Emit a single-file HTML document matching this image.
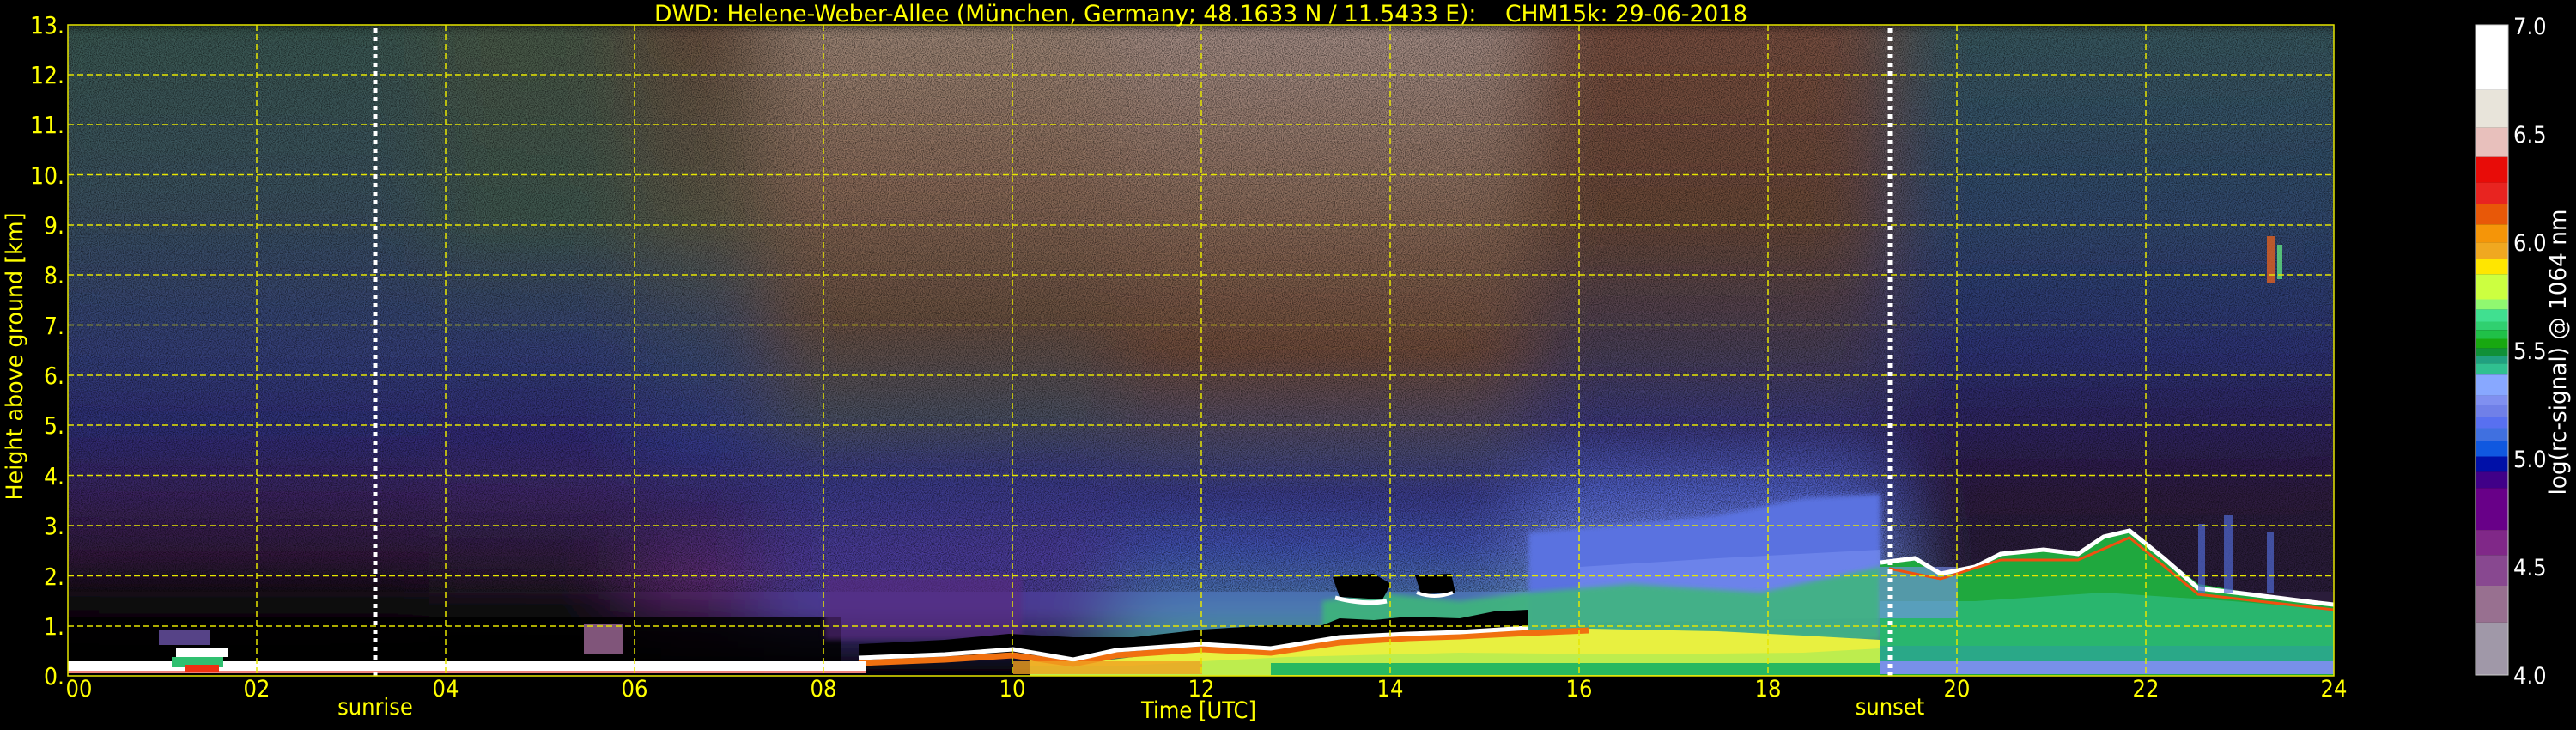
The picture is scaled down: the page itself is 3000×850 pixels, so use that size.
<!DOCTYPE html>
<html><head><meta charset="utf-8"><style>
html,body{margin:0;padding:0;background:#000;}
svg{display:block}
text{font-family:"DejaVu Sans Condensed","DejaVu Sans","Liberation Sans",sans-serif;fill:#ffff00}
</style></head><body>
<svg width="3000" height="850" viewBox="0 0 3000 850" xmlns="http://www.w3.org/2000/svg">
<defs>
<clipPath id="pc"><rect x="79" y="29" width="2639" height="758"/></clipPath>
<filter id="hb" x="-5%" y="-5%" width="110%" height="110%"><feGaussianBlur stdDeviation="45 6"/></filter>
<filter id="sb"><feGaussianBlur stdDeviation="3"/></filter>
<filter id="nz" x="0" y="0" width="100%" height="100%">
<feTurbulence type="fractalNoise" baseFrequency="0.9" numOctaves="1" seed="3" result="t"/>
<feColorMatrix type="matrix" values="0 0 0 0 0  0 0 0 0 0  0 0 0 0 0  1.5 0 0 0 -0.58"/>
</filter>
<linearGradient id="g1" x1="0" y1="0" x2="0" y2="1"><stop offset="0" stop-color="#3a5a52"/><stop offset=".3" stop-color="#3a5062"/><stop offset=".5" stop-color="#34407a"/><stop offset=".62" stop-color="#2e2e78"/><stop offset=".72" stop-color="#3a2460"/><stop offset=".82" stop-color="#30183a"/><stop offset=".88" stop-color="#100810"/><stop offset="1" stop-color="#000"/></linearGradient>
<linearGradient id="g2" x1="0" y1="0" x2="0" y2="1"><stop offset="0" stop-color="#4a5a48"/><stop offset=".3" stop-color="#405850"/><stop offset=".5" stop-color="#34407a"/><stop offset=".62" stop-color="#302c78"/><stop offset=".72" stop-color="#3e2868"/><stop offset=".85" stop-color="#2a1830"/><stop offset=".9" stop-color="#0a0a0a"/><stop offset="1" stop-color="#000"/></linearGradient>
<linearGradient id="g3" x1="0" y1="0" x2="0" y2="1"><stop offset="0" stop-color="#6a5040"/><stop offset=".3" stop-color="#5a5a48"/><stop offset=".5" stop-color="#3a4a70"/><stop offset=".65" stop-color="#33388a"/><stop offset=".75" stop-color="#402a70"/><stop offset=".85" stop-color="#5a2a70"/><stop offset=".9" stop-color="#3a1a48"/><stop offset="1" stop-color="#000"/></linearGradient>
<linearGradient id="g4" x1="0" y1="0" x2="0" y2="1"><stop offset="0" stop-color="#a08878"/><stop offset=".25" stop-color="#8a6a58"/><stop offset=".45" stop-color="#6a5040"/><stop offset=".6" stop-color="#4a5060"/><stop offset=".7" stop-color="#3a3a8a"/><stop offset=".82" stop-color="#4a3a9a"/><stop offset=".9" stop-color="#4a3a90"/><stop offset="1" stop-color="#000"/></linearGradient>
<linearGradient id="g5" x1="0" y1="0" x2="0" y2="1"><stop offset="0" stop-color="#a89088"/><stop offset=".3" stop-color="#8a6a58"/><stop offset=".5" stop-color="#704c3a"/><stop offset=".65" stop-color="#4a4a70"/><stop offset=".72" stop-color="#3a3c8c"/><stop offset=".8" stop-color="#4050b0"/><stop offset=".9" stop-color="#4c7ab0"/><stop offset="1" stop-color="#30a060"/></linearGradient>
<linearGradient id="g6" x1="0" y1="0" x2="0" y2="1"><stop offset="0" stop-color="#7a5040"/><stop offset=".3" stop-color="#6a4838"/><stop offset=".5" stop-color="#4a4058"/><stop offset=".62" stop-color="#3a3880"/><stop offset=".72" stop-color="#5060c8"/><stop offset=".8" stop-color="#6a80e0"/><stop offset=".9" stop-color="#70a0d0"/><stop offset="1" stop-color="#40b070"/></linearGradient>
<linearGradient id="g7" x1="0" y1="0" x2="0" y2="1"><stop offset="0" stop-color="#3a5a60"/><stop offset=".3" stop-color="#304a70"/><stop offset=".5" stop-color="#2e3478"/><stop offset=".62" stop-color="#2e2460"/><stop offset=".72" stop-color="#2e1a40"/><stop offset=".8" stop-color="#2a1a3a"/><stop offset="1" stop-color="#2a1a3a"/></linearGradient>
</defs>

<rect width="3000" height="850" fill="#000"/>

<g clip-path="url(#pc)">
 <g filter="url(#hb)">
  <rect x="0" y="29" width="500" height="758" fill="url(#g1)"/>
  <rect x="500" y="29" width="240" height="758" fill="url(#g2)"/>
  <rect x="740" y="29" width="150" height="758" fill="url(#g3)"/>
  <rect x="890" y="29" width="410" height="758" fill="url(#g4)"/>
  <rect x="1300" y="29" width="480" height="758" fill="url(#g5)"/>
  <rect x="1780" y="29" width="420" height="758" fill="url(#g6)"/>
  <rect x="2200" y="29" width="600" height="758" fill="url(#g7)"/>
 </g>

 <!-- speckle texture -->
 <rect x="79" y="29" width="2639" height="660" filter="url(#nz)"/>

 <rect x="79" y="718" width="900" height="60" fill="#000" opacity="0.85"/>
 <rect x="680" y="727" width="46" height="35" fill="#a06a98" opacity="0.8"/>
 <rect x="960" y="670" width="230" height="75" fill="#5a2a80" opacity="0.6" filter="url(#sb)"/>

 <polygon points="1780,620 1900,610 2000,600 2100,580 2190,575 2190,740 1780,740" fill="#5a72e0" filter="url(#sb)"/>
 <polygon points="1840,660 2000,650 2190,640 2190,720 1840,725" fill="#7890f0" opacity="0.6"/>
 <polygon points="1540,700 1600,690 1700,700 1780,690 1900,680 2050,690 2190,660 2190,745 1540,745" fill="#3cb878" opacity="0.85" filter="url(#sb)"/>
 <polygon points="1552,672 1600,668 1620,680 1610,698 1560,695" fill="#000"/>
 <path d="M1555,696 Q1590,705 1615,700" stroke="#fff" stroke-width="5" fill="none"/>
 <polygon points="1648,670 1690,668 1695,690 1655,692" fill="#000"/>
 <path d="M1650,690 Q1670,698 1692,690" stroke="#fff" stroke-width="4" fill="none"/>

 <polygon points="1000,750 1100,745 1175,738 1250,742 1320,742 1400,733 1480,728 1540,728 1560,720 1600,722 1640,718 1700,720 1740,712 1780,710 1780,735 1700,738 1640,740 1560,745 1520,750 1480,758 1400,752 1300,760 1250,770 1180,760 1100,765 1000,770" fill="#000"/>
 <polygon points="1200,785 1200,768 1260,772 1320,765 1400,755 1480,758 1540,748 1600,742 1700,740 1780,735 1850,732 2000,735 2100,740 2190,745 2190,787 1200,787" fill="#e8f040"/>
 <polygon points="1200,787 1200,775 1300,776 1400,770 1500,765 1700,760 1900,762 2100,760 2190,755 2190,787" fill="#b8ec50" opacity="0.9"/>
 <rect x="1480" y="772" width="710" height="14" fill="#28b860"/>
 <path d="M1000,772 L1100,768 L1180,763 L1250,773 L1300,763 L1400,756 L1480,760 L1560,748 L1640,743 L1700,741 L1780,737 L1850,734" stroke="#f07010" stroke-width="7" fill="none"/>
 <path d="M1000,766 L1100,762 L1180,756 L1250,768 L1300,757 L1400,750 L1480,755 L1560,742 L1640,738 L1700,736 L1780,731" stroke="#fff" stroke-width="5" fill="none"/>
 <rect x="1180" y="770" width="220" height="15" fill="#f0a020" opacity="0.8"/>

 <rect x="79" y="770" width="930" height="14" fill="#fff"/>
 <rect x="79" y="781" width="930" height="3" fill="#e03020" opacity="0.6"/>
 <rect x="200" y="765" width="60" height="12" fill="#30c070"/>
 <rect x="205" y="755" width="60" height="10" fill="#fff"/>
 <rect x="185" y="733" width="60" height="18" fill="#7a60c0" opacity="0.7"/>
 <rect x="215" y="774" width="40" height="8" fill="#f03010"/>

 <polygon points="2190,655 2230,650 2260,668 2300,660 2330,645 2380,640 2420,645 2450,625 2480,618 2510,640 2560,680 2620,690 2660,695 2700,700 2718,702 2718,787 2190,787" fill="#1fa83e"/>
 <polygon points="2190,700 2300,700 2450,690 2600,700 2718,710 2718,760 2190,760" fill="#30c090" opacity="0.6"/>
 <rect x="2190" y="752" width="528" height="18" fill="#2aa888"/>
 <rect x="2190" y="770" width="528" height="15" fill="#7890e8"/>
 <rect x="2190" y="660" width="90" height="60" fill="#7890f0" opacity="0.6"/>
 <path d="M2190,655 L2230,650 L2260,668 L2300,660 L2330,645 L2380,640 L2420,645 L2450,625 L2480,618 L2520,650 L2560,685 L2620,692 L2660,697 L2700,702 L2718,704" stroke="#fff" stroke-width="5" fill="none"/>
 <path d="M2200,662 L2260,674 L2330,652 L2420,652 L2480,626 L2560,692 L2718,710" stroke="#f05010" stroke-width="3" fill="none"/>
 <rect x="2560" y="610" width="8" height="80" fill="#5068d0" opacity="0.7"/>
 <rect x="2590" y="600" width="10" height="90" fill="#5068d0" opacity="0.7"/>
 <rect x="2640" y="620" width="8" height="70" fill="#5068d0" opacity="0.7"/>
 <rect x="2640" y="275" width="10" height="55" fill="#e06020" opacity="0.8"/>
 <rect x="2652" y="285" width="6" height="40" fill="#60e080" opacity="0.8"/>

 <g stroke="#e6e600" stroke-width="1.5" stroke-dasharray="7 4" fill="none">
  <path d="M79,729H2718M79,670.5H2718M79,612H2718M79,553.5H2718M79,495H2718M79,437H2718M79,378.5H2718M79,320H2718M79,262H2718M79,203.5H2718M79,145H2718M79,87H2718"/>
  <path d="M299,29V787M519,29V787M739,29V787M959,29V787M1179,29V787M1399,29V787M1619,29V787M1839,29V787M2059,29V787M2279,29V787M2499,29V787"/>
 </g>
 <g stroke="#fff" stroke-width="5" stroke-dasharray="5 5">
  <path d="M437,33V787"/><path d="M2201,33V787"/>
 </g>
</g>
<rect x="79" y="29" width="2639" height="758" fill="none" stroke="#e6e600" stroke-width="1.5"/>

<text x="762" y="25" font-size="27" textLength="1273" lengthAdjust="spacingAndGlyphs">DWD: Helene-Weber-Allee (München, Germany; 48.1633 N / 11.5433 E):&#160;&#160;&#160;&#160;CHM15k: 29-06-2018</text>

<g font-size="28" text-anchor="end">
<text x="75" y="39">13.</text><text x="75" y="97">12.</text><text x="75" y="155">11.</text><text x="75" y="214">10.</text><text x="75" y="272">9.</text><text x="75" y="330">8.</text><text x="75" y="389">7.</text><text x="75" y="447">6.</text><text x="75" y="505">5.</text><text x="75" y="564">4.</text><text x="75" y="622">3.</text><text x="75" y="681">2.</text><text x="75" y="739">1.</text><text x="75" y="797">0.</text>
</g>
<text transform="translate(26,415) rotate(-90)" font-size="27" text-anchor="middle" textLength="335" lengthAdjust="spacingAndGlyphs">Height above ground [km]</text>

<g font-size="27" text-anchor="middle">
<text x="92" y="811">00</text><text x="299" y="811">02</text><text x="519" y="811">04</text><text x="739" y="811">06</text><text x="959" y="811">08</text><text x="1179" y="811">10</text><text x="1399" y="811">12</text><text x="1619" y="811">14</text><text x="1839" y="811">16</text><text x="2059" y="811">18</text><text x="2279" y="811">20</text><text x="2499" y="811">22</text><text x="2718" y="811">24</text>
<text x="437" y="832">sunrise</text><text x="2201" y="832">sunset</text>
<text x="1396" y="836">Time [UTC]</text>
</g>

<g>
<rect x="2883" y="29" width="38" height="75.8" fill="#ffffff"/>
<rect x="2883" y="104.8" width="38" height="43.9" fill="#e8e4da"/>
<rect x="2883" y="148.7" width="38" height="34.1" fill="#e8c0bc"/>
<rect x="2883" y="182.8" width="38" height="29.8" fill="#e80c08"/>
<rect x="2883" y="212.6" width="38" height="24.9" fill="#e82420"/>
<rect x="2883" y="237.5" width="38" height="23.8" fill="#e85808"/>
<rect x="2883" y="261.3" width="38" height="21.1" fill="#f59508"/>
<rect x="2883" y="282.4" width="38" height="19" fill="#f0a820"/>
<rect x="2883" y="301.4" width="38" height="17.9" fill="#ffe600"/>
<rect x="2883" y="319.3" width="38" height="29.2" fill="#ccff40"/>
<rect x="2883" y="348.5" width="38" height="11.9" fill="#90f870"/>
<rect x="2883" y="360.4" width="38" height="14.1" fill="#40e090"/>
<rect x="2883" y="374.5" width="38" height="9.7" fill="#30d070"/>
<rect x="2883" y="384.2" width="38" height="10.3" fill="#20c048"/>
<rect x="2883" y="394.5" width="38" height="10.9" fill="#18a810"/>
<rect x="2883" y="405.4" width="38" height="8.6" fill="#109038"/>
<rect x="2883" y="414" width="38" height="9.2" fill="#20a080"/>
<rect x="2883" y="423.2" width="38" height="13" fill="#30c090"/>
<rect x="2883" y="436.2" width="38" height="24.4" fill="#88a8ff"/>
<rect x="2883" y="460.6" width="38" height="10.8" fill="#8090f0"/>
<rect x="2883" y="471.4" width="38" height="14.1" fill="#7080e8"/>
<rect x="2883" y="485.5" width="38" height="13" fill="#5870f0"/>
<rect x="2883" y="498.5" width="38" height="14.6" fill="#4070e0"/>
<rect x="2883" y="513.1" width="38" height="18.4" fill="#1058e0"/>
<rect x="2883" y="531.5" width="38" height="17.9" fill="#0010a8"/>
<rect x="2883" y="549.4" width="38" height="18.9" fill="#400088"/>
<rect x="2883" y="568.3" width="38" height="48.8" fill="#680088"/>
<rect x="2883" y="617.1" width="38" height="29.2" fill="#802888"/>
<rect x="2883" y="646.3" width="38" height="35.7" fill="#884890"/>
<rect x="2883" y="682" width="38" height="42.8" fill="#987090"/>
<rect x="2883" y="724.8" width="38" height="61.2" fill="#a098a8"/>
<rect x="2883" y="29" width="38" height="757" fill="none" stroke="#ccc" stroke-width="1"/>
</g>
<g font-size="27">
<text x="2927" y="40" style="fill:#fff">7.0</text>
<text x="2927" y="166" style="fill:#fff">6.5</text>
<text x="2927" y="292" style="fill:#fff">6.0</text>
<text x="2927" y="418" style="fill:#fff">5.5</text>
<text x="2927" y="544" style="fill:#fff">5.0</text>
<text x="2927" y="670" style="fill:#fff">4.5</text>
<text x="2927" y="796" style="fill:#fff">4.0</text>
</g>
<text transform="translate(2988,410) rotate(-90)" font-size="27" text-anchor="middle" textLength="333" lengthAdjust="spacingAndGlyphs" style="fill:#fff">log(rc-signal) @ 1064 nm</text>
</svg>
</body></html>
